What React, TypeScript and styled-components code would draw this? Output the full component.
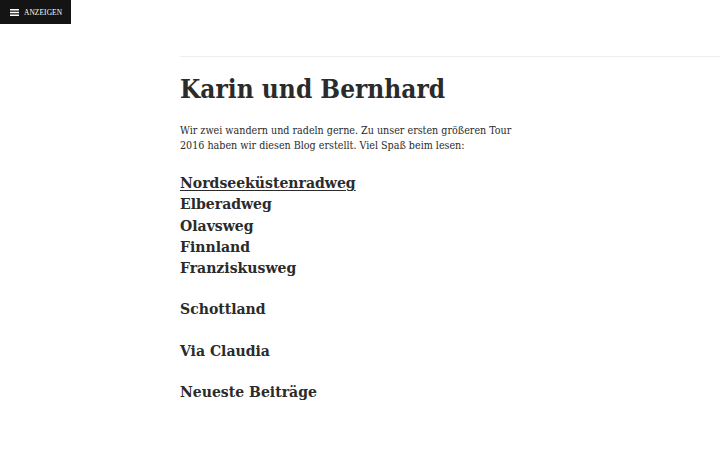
import React from 'react';
import styled, { createGlobalStyle } from 'styled-components';

const GlobalStyle = createGlobalStyle`
  html, body {
    margin: 0;
    padding: 0;
    background: #fff;
  }
  body {
    font-family: "DejaVu Serif Condensed", "DejaVu Serif", "Liberation Serif", serif;
    color: #2b2b2b;
  }
`;

const Page = styled.div`
  width: 720px;
  height: 450px;
  overflow: hidden;
  display: flex;
  flex-direction: column;
`;

const Toggle = styled.button`
  align-self: flex-start;
  display: flex;
  align-items: center;
  gap: 5px;
  height: 24px;
  width: 71px;
  padding: 0 0 0 10px;
  border: 0;
  background: #141414;
  color: #fff;
  font-family: "Liberation Serif", serif;
  font-size: 7.4px;
  letter-spacing: 0.1px;
  text-transform: uppercase;
  cursor: pointer;
`;

const Main = styled.main`
  margin: 32px 0 0 180px;
  border-top: 1px solid #eeeeee;
  padding-top: 14px;
`;

const Title = styled.h1`
  margin: 0;
  font-size: 26px;
  font-weight: 700;
  line-height: 36px;
  color: #2b2b2b;
`;

const Intro = styled.p`
  margin: 16px 0 0;
  width: 340px;
  font-size: 10.65px;
  line-height: 15px;
  color: #2b2b2b;
`;

const Section = styled.section<{ $gap: number }>`
  margin-top: ${p => p.$gap}px;
  display: flex;
  flex-direction: column;
`;

const Item = styled.a<{ $current?: boolean }>`
  font-size: 15.6px;
  font-weight: 700;
  line-height: 21.3px;
  color: #2b2b2b;
  text-decoration: ${p => (p.$current ? 'underline' : 'none')};
  text-underline-offset: 2px;
  text-decoration-thickness: 1px;
`;

const Heading = styled.h2`
  margin: 0;
  font-size: 15.6px;
  font-weight: 700;
  line-height: 21.5px;
  color: #2b2b2b;
`;

const MenuIcon = () => (
  <svg width="9" height="7" viewBox="0 0 9 7" fill="#fff">
    <rect x="0" y="0" width="9" height="1.5" />
    <rect x="0" y="2.75" width="9" height="1.5" />
    <rect x="0" y="5.5" width="9" height="1.5" />
  </svg>
);

const tours = ['Nordseeküstenradweg', 'Elberadweg', 'Olavsweg', 'Finnland', 'Franziskusweg'];

export default function App(): React.ReactElement {
  return (
    <Page>
      <GlobalStyle />
      <Toggle>
        <MenuIcon />
        Anzeigen
      </Toggle>
      <Main>
        <Title>Karin und Bernhard</Title>
        <Intro>
          Wir zwei wandern und radeln gerne. Zu unser ersten größeren Tour 2016 haben wir diesen Blog erstellt. Viel Spaß beim lesen:
        </Intro>
        <Section $gap={19}>
          {tours.map((t, i) => (
            <Item key={t} href="#" $current={i === 0}>{t}</Item>
          ))}
        </Section>
        <Section $gap={20}>
          <Heading>Schottland</Heading>
        </Section>
        <Section $gap={20}>
          <Heading>Via Claudia</Heading>
        </Section>
        <Section $gap={20}>
          <Heading>Neueste Beiträge</Heading>
        </Section>
      </Main>
    </Page>
  );
}
